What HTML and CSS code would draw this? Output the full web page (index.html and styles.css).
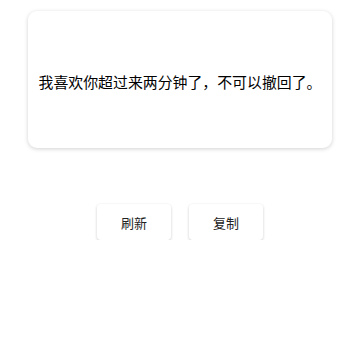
FILE: index.html
```html
<!DOCTYPE html>
<html lang="zh">

<head>
  <meta charset="UTF-8" />
  <meta name="viewport" content="width=device-width, initial-scale=1.0" />
  <title>撤回</title>
  <link rel="stylesheet" href="styles.css">
</head>

<body>
  <div class="page">
    <div class="card">
      <p class="message">我喜欢你超过来两分钟了，不可以撤回了。</p>
    </div>

    <div class="buttons">
      <button class="btn">刷新</button>
      <button class="btn">复制</button>
    </div>
  </div>
</body>

</html>
```

FILE: styles.css
```css
body {
  margin: 0;
  padding: 0;
  background: #fff;
  font-family: "Noto Sans CJK SC", "Noto Sans", sans-serif;
}

.page {
  padding: 11px 28px 0;
}

.card {
  height: 137px;
  border-radius: 9px;
  background: #fff;
  box-shadow: 0 1px 4px rgba(0, 0, 0, 0.18);
  display: flex;
  align-items: center;
  justify-content: center;
}

.message {
  margin: 0;
  padding-top: 3px;
  font-size: 14.9px;
  color: #000;
  white-space: nowrap;
}

.buttons {
  display: flex;
  justify-content: center;
  gap: 18px;
  margin-top: 56px;
}

.btn {
  width: 74px;
  height: 36px;
  border: none;
  border-radius: 4px;
  background: #fff;
  box-shadow: 0 1px 3px rgba(0, 0, 0, 0.2);
  font-family: "Noto Sans CJK SC", sans-serif;
  font-size: 13px;
  color: #222;
  padding: 0;
}
```
